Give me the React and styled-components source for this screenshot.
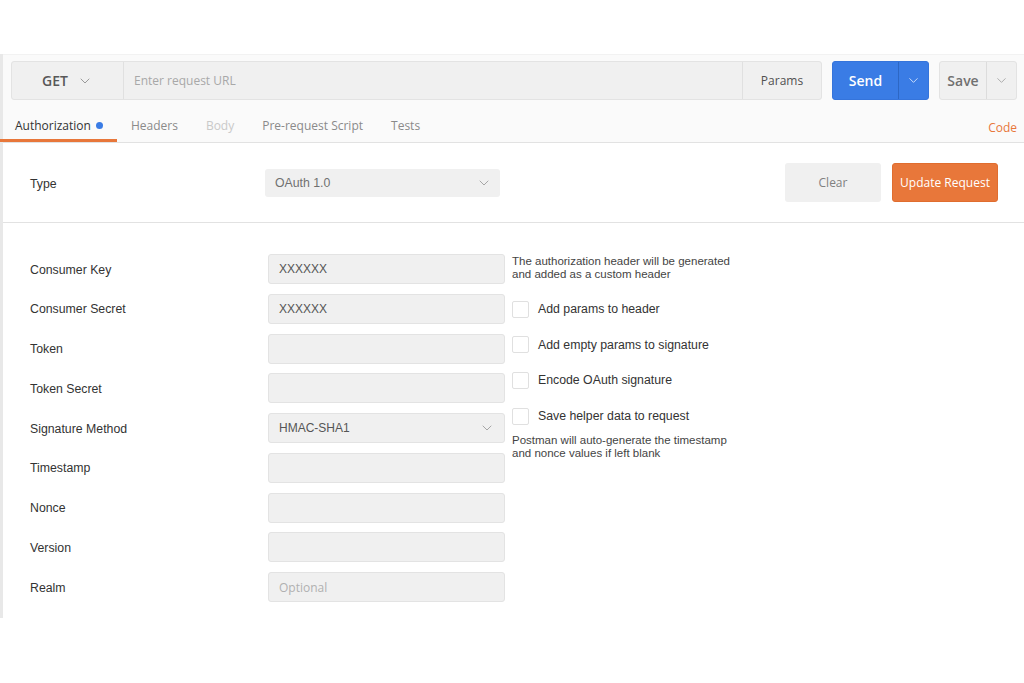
import React from "react";
import styled, { createGlobalStyle } from "styled-components";
import { ChevronDown } from "lucide-react";

const GlobalStyle = createGlobalStyle`
  body {
    margin: 0;
    background: #ffffff;
    font-family: "Open Sans", sans-serif;
  }
`;

export default function App() {
  const fields = [
    { label: "Consumer Key", value: "XXXXXX" },
    { label: "Consumer Secret", value: "XXXXXX" },
    { label: "Token" },
    { label: "Token Secret" },
    { label: "Signature Method", value: "HMAC-SHA1", select: true },
    { label: "Timestamp" },
    { label: "Nonce" },
    { label: "Version" },
    { label: "Realm", placeholder: "Optional" },
  ];
  const options = [
    "Add params to header",
    "Add empty params to signature",
    "Encode OAuth signature",
    "Save helper data to request",
  ];
  const tabs = [
    { name: "Authorization", tone: "active" },
    { name: "Headers" },
    { name: "Body", tone: "disabled" },
    { name: "Pre-request Script" },
    { name: "Tests" },
  ];

  return (
    <>
      <GlobalStyle />
      <Panel>
        <Header>
          <UrlRow>
            <UrlBar>
              <Method>
                GET <ChevronDown size={16} strokeWidth={1.5} color="#9a9a9a" />
              </Method>
              <UrlInput>Enter request URL</UrlInput>
              <Params>Params</Params>
            </UrlBar>
            <SplitButton $primary>
              <SplitMain $primary>Send</SplitMain>
              <SplitArrow $primary>
                <ChevronDown size={15} strokeWidth={1.5} color="#cfe0fb" />
              </SplitArrow>
            </SplitButton>
            <SplitButton>
              <SplitMain>Save</SplitMain>
              <SplitArrow>
                <ChevronDown size={15} strokeWidth={1.5} color="#a8a8a8" />
              </SplitArrow>
            </SplitButton>
          </UrlRow>
          <TabBar>
            {tabs.map(({ name, tone }) => (
              <Tab key={name} $tone={tone}>
                {name}
                {tone === "active" && <Dot />}
              </Tab>
            ))}
            <CodeLink>Code</CodeLink>
          </TabBar>
        </Header>

        <TypeRow>
          <TypeLabel>Type</TypeLabel>
          <TypeSelect>
            OAuth 1.0
            <ChevronDown size={16} strokeWidth={1.3} color="#9a9a9a" />
          </TypeSelect>
          <Actions>
            <ClearButton>Clear</ClearButton>
            <UpdateButton>Update Request</UpdateButton>
          </Actions>
        </TypeRow>

        <FormArea>
          <FieldList>
            {fields.map(({ label, value, placeholder, select }) => (
              <FieldRow key={label}>
                <FieldLabel>{label}</FieldLabel>
                <FieldInput $placeholder={!!placeholder}>
                  {value || placeholder || ""}
                  {select && (
                    <ChevronDown size={16} strokeWidth={1.3} color="#9a9a9a" />
                  )}
                </FieldInput>
              </FieldRow>
            ))}
          </FieldList>
          <SideColumn>
            <HelpText>
              The authorization header will be generated
              <br />
              and added as a custom header
            </HelpText>
            <CheckList>
              {options.map((opt) => (
                <CheckRow key={opt}>
                  <CheckBox />
                  {opt}
                </CheckRow>
              ))}
            </CheckList>
            <HelpText>
              Postman will auto-generate the timestamp
              <br />
              and nonce values if left blank
            </HelpText>
          </SideColumn>
        </FormArea>
      </Panel>
    </>
  );
}

const Panel = styled.div`
  margin-top: 54px;
  height: 564px;
  border-left: 3px solid #e8e8e8;
  box-sizing: border-box;
`;

const Header = styled.div`
  background: #fafafa;
  border-top: 1px solid #f2f2f2;
  border-bottom: 1px solid #e2e2e2;
  padding-top: 6px;
`;

const UrlRow = styled.div`
  display: flex;
  gap: 10px;
  padding: 0 7px 0 8px;
  height: 39px;
`;

const UrlBar = styled.div`
  flex: 1;
  display: flex;
  background: #f0f0f0;
  border: 1px solid #e3e3e3;
  border-radius: 3px;
  color: #555;
`;

const Method = styled.div`
  width: 111px;
  display: flex;
  align-items: center;
  justify-content: center;
  gap: 9px;
  font-size: 14px;
  font-weight: 600;
  color: #585858;
  border-right: 1px solid #e0e0e0;
`;

const UrlInput = styled.div`
  flex: 1;
  display: flex;
  align-items: center;
  padding-left: 10px;
  font-size: 12px;
  color: #a8a8a8;
`;

const Params = styled.div`
  width: 78px;
  display: flex;
  align-items: center;
  justify-content: center;
  font-size: 12px;
  color: #505050;
  border-left: 1px solid #e0e0e0;
`;

const SplitButton = styled.div`
  display: flex;
  width: ${(p) => (p.$primary ? "97px" : "78px")};
  border-radius: 3px;
  background: ${(p) => (p.$primary ? "#3a7ce5" : "#f0f0f0")};
  border: 1px solid ${(p) => (p.$primary ? "#3574db" : "#e3e3e3")};
  box-sizing: border-box;
`;

const SplitMain = styled.div`
  flex: 1;
  display: flex;
  align-items: center;
  justify-content: center;
  font-size: 14px;
  font-weight: 600;
  color: ${(p) => (p.$primary ? "#ffffff" : "#707070")};
`;

const SplitArrow = styled.div`
  width: 29px;
  display: flex;
  align-items: center;
  justify-content: center;
  border-left: 1px solid ${(p) => (p.$primary ? "#2d67c4" : "#dcdcdc")};
`;

const TabBar = styled.div`
  display: flex;
  align-items: stretch;
  height: 42px;
  margin-left: -3px;
`;

const Tab = styled.div`
  display: flex;
  align-items: center;
  gap: 5px;
  padding: 11px 14px 0;
  font-size: 12px;
  color: ${(p) =>
    p.$tone === "active" ? "#333" : p.$tone === "disabled" ? "#c9c9c9" : "#8a8a8a"};
  border-bottom: 3px solid
    ${(p) => (p.$tone === "active" ? "#e8773a" : "transparent")};
  &:first-child {
    padding: 11px 14px 0 15px;
  }
`;

const Dot = styled.span`
  width: 7px;
  height: 7px;
  border-radius: 50%;
  background: #3a7ce5;
`;

const CodeLink = styled.div`
  margin-left: auto;
  padding: 13px 7px 0 0;
  display: flex;
  align-items: center;
  font-size: 12px;
  color: #e8773a;
`;

const TypeRow = styled.div`
  display: flex;
  align-items: center;
  height: 79px;
  padding: 0 26px 0 27px;
  border-bottom: 1px solid #e2e2e2;
`;

const TypeLabel = styled.div`
  width: 235px;
  margin-top: 2px;
  font-family: "Liberation Sans", Arial, sans-serif;
  font-size: 12.3px;
  color: #333;
`;

const TypeSelect = styled.div`
  width: 235px;
  height: 28px;
  margin-top: 1px;
  box-sizing: border-box;
  display: flex;
  align-items: center;
  justify-content: space-between;
  padding: 0 8px 0 10px;
  background: #f0f0f0;
  border-radius: 3px;
  font-family: "Liberation Sans", Arial, sans-serif;
  font-size: 12.3px;
  color: #707070;
`;

const Actions = styled.div`
  margin-left: auto;
  display: flex;
  gap: 11px;
`;

const ClearButton = styled.div`
  width: 96px;
  height: 39px;
  display: flex;
  align-items: center;
  justify-content: center;
  background: #f0f0f0;
  border-radius: 3px;
  font-size: 12px;
  color: #808080;
`;

const UpdateButton = styled(ClearButton)`
  width: 106px;
  background: #e8773a;
  border: 1px solid #e06d2f;
  box-sizing: border-box;
  color: #ffffff;
`;

const FormArea = styled.div`
  display: flex;
  gap: 7px;
  padding: 31px 0 0 27px;
`;

const FieldList = styled.div`
  display: flex;
  flex-direction: column;
  gap: 9.75px;
`;

const FieldRow = styled.div`
  display: flex;
  align-items: center;
`;

const FieldLabel = styled.div`
  width: 238px;
  margin-top: 1px;
  font-family: "Liberation Sans", Arial, sans-serif;
  font-size: 12.3px;
  color: #333;
`;

const FieldInput = styled.div`
  width: 237px;
  height: 30px;
  box-sizing: border-box;
  display: flex;
  align-items: center;
  justify-content: space-between;
  padding: 0 9px 0 10px;
  background: #f0f0f0;
  border: 1px solid #e3e3e3;
  border-radius: 3px;
  font-family: ${(p) =>
    p.$placeholder ? '"Open Sans", sans-serif' : '"Liberation Sans", Arial, sans-serif'};
  font-size: 12px;
  color: ${(p) => (p.$placeholder ? "#b0b0b0" : "#555")};
`;

const SideColumn = styled.div`
  display: flex;
  flex-direction: column;
  padding-top: 1px;
`;

const HelpText = styled.div`
  font-family: "Liberation Sans", Arial, sans-serif;
  font-size: 11.5px;
  line-height: 13px;
  color: #444;
`;

const CheckList = styled.div`
  display: flex;
  flex-direction: column;
  gap: 15.7px;
  margin: 18px 0 8px;
`;

const CheckRow = styled.div`
  display: flex;
  align-items: center;
  gap: 9px;
  height: 20px;
  font-family: "Liberation Sans", Arial, sans-serif;
  font-size: 12.3px;
  color: #333;
`;

const CheckBox = styled.span`
  width: 15px;
  height: 15px;
  border: 1px solid #e0e0e0;
  border-radius: 2px;
  background: #fff;
`;
